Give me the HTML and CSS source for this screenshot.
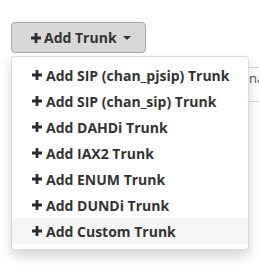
FILE: index.html
```html
<!DOCTYPE html>
<html>
<head>
<meta charset="utf-8">
<link rel="stylesheet" href="styles.css">
</head>
<body>
<div class="page">
  <div class="toolbar">
    <button class="btn">
      <svg class="plus" viewBox="0 0 10 10"><path d="M3.6 0h2.8v3.6H10v2.8H6.4V10H3.6V6.4H0V3.6h3.6z"/></svg>
      <span>Add Trunk</span>
      <span class="caret"></span>
    </button>
    <ul class="menu">
      <li class="item"><svg class="plus" viewBox="0 0 10 10"><path d="M3.6 0h2.8v3.6H10v2.8H6.4V10H3.6V6.4H0V3.6h3.6z"/></svg>Add SIP (chan_pjsip) Trunk</li>
      <li class="item"><svg class="plus" viewBox="0 0 10 10"><path d="M3.6 0h2.8v3.6H10v2.8H6.4V10H3.6V6.4H0V3.6h3.6z"/></svg>Add SIP (chan_sip) Trunk</li>
      <li class="item"><svg class="plus" viewBox="0 0 10 10"><path d="M3.6 0h2.8v3.6H10v2.8H6.4V10H3.6V6.4H0V3.6h3.6z"/></svg>Add DAHDi Trunk</li>
      <li class="item"><svg class="plus" viewBox="0 0 10 10"><path d="M3.6 0h2.8v3.6H10v2.8H6.4V10H3.6V6.4H0V3.6h3.6z"/></svg>Add IAX2 Trunk</li>
      <li class="item"><svg class="plus" viewBox="0 0 10 10"><path d="M3.6 0h2.8v3.6H10v2.8H6.4V10H3.6V6.4H0V3.6h3.6z"/></svg>Add ENUM Trunk</li>
      <li class="item"><svg class="plus" viewBox="0 0 10 10"><path d="M3.6 0h2.8v3.6H10v2.8H6.4V10H3.6V6.4H0V3.6h3.6z"/></svg>Add DUNDi Trunk</li>
      <li class="item hover"><svg class="plus" viewBox="0 0 10 10"><path d="M3.6 0h2.8v3.6H10v2.8H6.4V10H3.6V6.4H0V3.6h3.6z"/></svg>Add Custom Trunk</li>
    </ul>
  </div>
  <div class="table">
    <div class="th">name</div>
  </div>
</div>
</body>
</html>
```
FILE: styles.css
```css
html, body {
  margin: 0;
  padding: 0;
  background: #fff;
}
.page {
  width: 259px;
  height: 276px;
  overflow: hidden;
  padding: 22px 0 0 11px;
  box-sizing: border-box;
  font-family: "Open Sans", sans-serif;
  color: #333;
}
.toolbar {
  position: relative;
  height: 45px;
}
.btn {
  display: flex;
  align-items: center;
  gap: 3px;
  width: 135px;
  height: 31px;
  box-sizing: border-box;
  padding: 0 0 0 19px;
  background: #d8d8d8;
  border: 1px solid #a6a6a6;
  border-radius: 4px;
  font-family: "Open Sans", sans-serif;
  font-size: 14px;
  font-weight: 700;
  color: #333;
  margin: 0;
}
.btn .plus {
  width: 10px;
  height: 10px;
}
.caret {
  width: 0;
  height: 0;
  border-left: 4px solid transparent;
  border-right: 4px solid transparent;
  border-top: 4px solid #333;
  margin-left: 3px;
}
.plus {
  fill: #2b2b2b;
  flex: none;
}
.menu {
  position: absolute;
  top: 34px;
  left: 0;
  z-index: 2;
  width: 238px;
  box-sizing: border-box;
  margin: 0;
  padding: 5px 0;
  list-style: none;
  background: #fff;
  border: 1px solid rgba(0,0,0,.15);
  border-radius: 4px;
  box-shadow: 0 6px 12px rgba(0,0,0,.175);
}
.item {
  display: flex;
  align-items: center;
  gap: 4px;
  height: 26px;
  padding-left: 20px;
  font-size: 14px;
  font-weight: 700;
  white-space: nowrap;
}
.item .plus {
  width: 10px;
  height: 10px;
}
.item.hover {
  background: #f5f5f5;
}
.table {
  height: 35px;
  border: 1px solid #c3dcef;
  border-right: none;
  box-sizing: border-box;
}
.th {
  padding: 2px 0 0 237px;
  font-size: 13px;
  line-height: 16px;
  color: #555;
  white-space: nowrap;
}
```
